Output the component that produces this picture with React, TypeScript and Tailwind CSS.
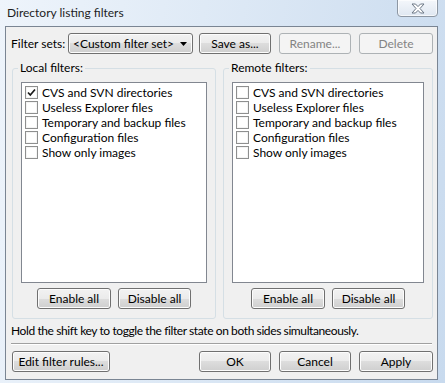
import React from "react";

const font = { fontFamily: '"Segoe UI", Lato, "Noto Sans", sans-serif' };

const items = [
  "CVS and SVN directories",
  "Useless Explorer files",
  "Temporary and backup files",
  "Configuration files",
  "Show only images",
];

function Btn({
  children,
  w,
  disabled,
}: {
  children: React.ReactNode;
  w: string;
  disabled?: boolean;
}) {
  if (disabled) {
    return (
      <div
        className={`${w} h-[21px] flex items-center justify-center rounded-[3px] border border-[#adb2b5] bg-[#f4f4f4] text-[#838383]`}
      >
        {children}
      </div>
    );
  }
  return (
    <div
      className={`${w} h-[21px] flex items-center justify-center rounded-[3px] border border-[#707070] bg-[linear-gradient(#f2f2f2_0%,#ebebeb_50%,#dddddd_50%,#cfcfcf_100%)] text-black shadow-[inset_0_0_0_1px_#fcfcfc]`}
    >
      {children}
    </div>
  );
}

function Checkbox({ checked }: { checked?: boolean }) {
  return (
    <div className="w-[13px] h-[13px] border border-[#8e8f8f] bg-white shadow-[inset_0_0_0_1px_#f4f4f4] flex items-center justify-center shrink-0">
      {checked && (
        <svg width="11" height="11" viewBox="0 0 11 11">
          <path d="M2 5.5 L4.3 8 L9 2.5" fill="none" stroke="#1a1a1a" strokeWidth="1.7" />
        </svg>
      )}
    </div>
  );
}

function FilterGroup({ title, w, checkedFirst }: { title: string; w: string; checkedFirst?: boolean }) {
  return (
    <div className={`relative ${w} h-[251px] rounded-[3px] border border-[#d5dfe5] px-[8px] pt-[13px]`}>
      <span className="absolute left-[5px] top-[-9px] bg-[#f0f0f0] px-[2px] leading-[16px]">
        {title}
      </span>
      <div className="h-[201px] border border-[#828790] bg-white pt-[2px] pl-[3px]">
        {items.map((it, i) => (
          <div key={it} className="h-[15px] flex items-center gap-[4px]">
            <Checkbox checked={checkedFirst && i === 0} />
            <span className="leading-[15px]">{it}</span>
          </div>
        ))}
      </div>
      <div className="flex justify-center gap-[7px] mt-[5px]">
        <Btn w="w-[74px]">Enable all</Btn>
        <Btn w="w-[73px]">Disable all</Btn>
      </div>
    </div>
  );
}

export default function App() {
  return (
    <div
      className="w-[445px] h-[383px] relative overflow-hidden bg-[linear-gradient(100deg,#eef4fb_0%,#dfeaf6_40%,#c8daee_100%)] text-[12px] text-black"
      style={font}
    >
      {/* title bar */}
      <div className="h-[26px] flex items-center pl-[7px] text-[#1e1e1e]">
        Directory listing filters
      </div>
      <div className="absolute left-[397px] top-[-1px] w-[41px] h-[18px] rounded-b-[4px] border border-[#8d97a3] bg-[linear-gradient(#f4f7fb,#dfe7f1)] shadow-[inset_0_0_0_1px_#ffffffaa] flex items-center justify-center">
        <svg width="14" height="11" viewBox="0 0 14 11">
          <path
            d="M1 1 L4.5 1 L7 3.6 L9.5 1 L13 1 L9 5.5 L13 10 L9.5 10 L7 7.4 L4.5 10 L1 10 L5 5.5 Z"
            fill="#ffffff"
            stroke="#6b7684"
            strokeWidth="1"
            strokeLinejoin="round"
          />
        </svg>
      </div>

      {/* client area */}
      <div className="ml-[5px] mr-[7px] h-[354px] border border-[#7a8593] bg-[#f0f0f0] flex flex-col">
        <div className="flex items-center mt-[6px] pl-[5px]">
          <span className="w-[57px]">Filter sets:</span>
          <div className="w-[125px] h-[21px] rounded-[3px] border border-[#707070] bg-[linear-gradient(#f2f2f2_0%,#ebebeb_50%,#dddddd_50%,#cfcfcf_100%)] shadow-[inset_0_0_0_1px_#fcfcfc] flex items-center pl-[4px] pr-[5px] justify-between">
            <span>&lt;Custom filter set&gt;</span>
            <svg width="7" height="4" viewBox="0 0 7 4">
              <path d="M0 0 L7 0 L3.5 4 Z" fill="#000" />
            </svg>
          </div>
          <div className="ml-[6px]">
            <Btn w="w-[72px]">Save as...</Btn>
          </div>
          <div className="ml-[8px]">
            <Btn w="w-[72px]" disabled>
              Rename...
            </Btn>
          </div>
          <div className="ml-[8px]">
            <Btn w="w-[74px]" disabled>
              Delete
            </Btn>
          </div>
        </div>

        <div className="flex gap-[7px] mt-[14px] pl-[6px]">
          <FilterGroup title="Local filters:" w="w-[204px]" checkedFirst />
          <FilterGroup title="Remote filters:" w="w-[210px]" />
        </div>

        <div className="pl-[5px] mt-[4px] leading-[16px] tracking-[-0.4px]">
          Hold the shift key to toggle the filter state on both sides simultaneously.
        </div>
        <div className="mx-[5px] mt-[4px] border-t border-[#a0a0a0] border-b border-b-white" />

        <div className="flex items-center mt-[6px] pl-[6px]">
          <Btn w="w-[98px]">Edit filter rules...</Btn>
          <div className="ml-[89px]">
            <Btn w="w-[72px]">OK</Btn>
          </div>
          <div className="ml-[8px]">
            <Btn w="w-[72px]">Cancel</Btn>
          </div>
          <div className="ml-[8px]">
            <Btn w="w-[74px]">Apply</Btn>
          </div>
        </div>
      </div>
    </div>
  );
}
